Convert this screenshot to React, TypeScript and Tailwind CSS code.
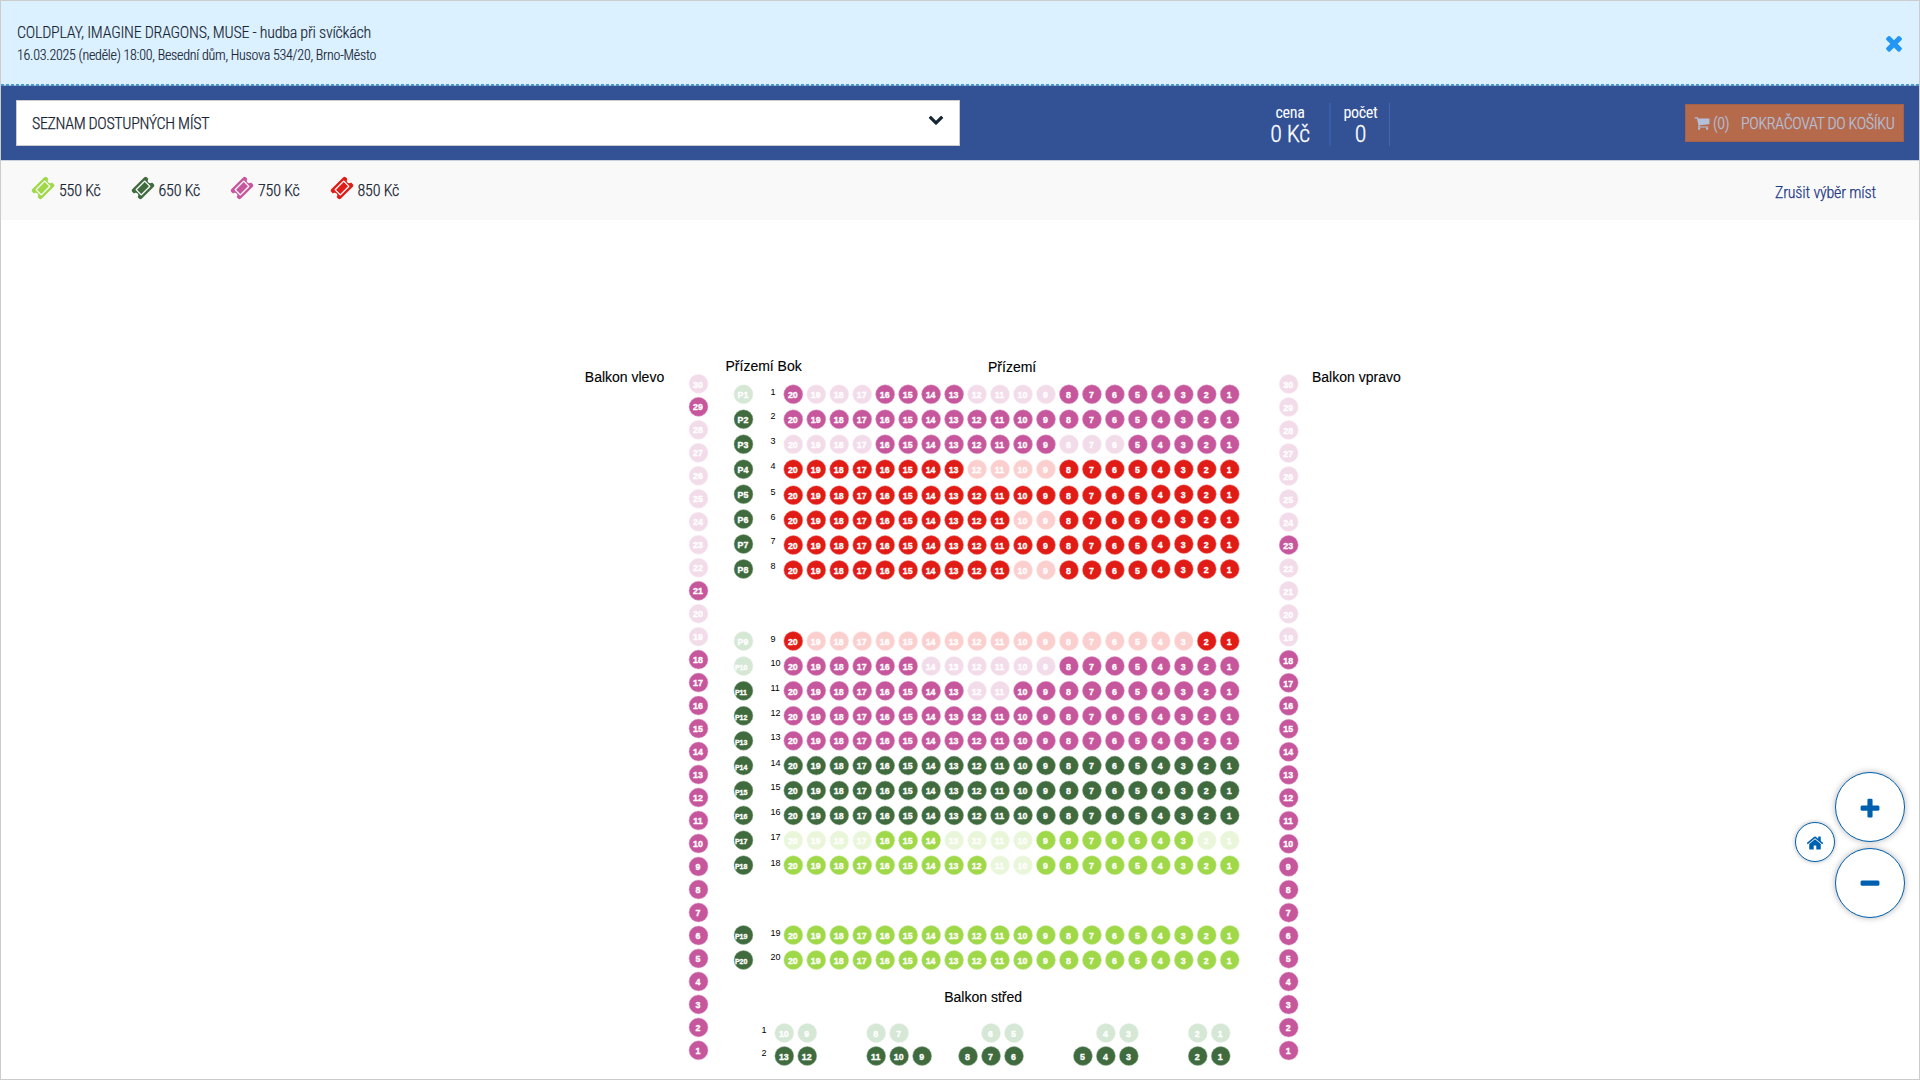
type Tone = "purple" | "red" | "green" | "lime";

const ICONS = {
  ticket:
    "M1024 452l316 316-572 572-316-316zm-211 979l618-618q19-19 19-45t-19-45l-362-362q-18-18-45-18t-45 18l-618 618q-19 19-19 45t19 45l362 362q18 18 45 18t45-18zm889-637l-907 908q-37 37-90.500 37t-90.500-37l-126-126q56-56 56-136t-56-136-136-56-136 56l-125-126q-37-37-37-90.500t37-90.500l907-906q37-37 90.500-37t90.500 37l125 125q-56 56-56 136t56 136 136 56 136-56l126 125q37 37 37 90.500t-37 90.500z",
  times:
    "M1490 1322q0 40-28 68l-136 136q-28 28-68 28t-68-28l-294-294-294 294q-28 28-68 28t-68-28l-136-136q-28-28-28-68t28-68l294-294-294-294q-28-28-28-68t28-68l136-136q28-28 68-28t68 28l294 294 294-294q28-28 68-28t68 28l136 136q28 28 28 68t-28 68l-294 294 294 294q28 28 28 68z",
  plus: "M1600 736v192q0 40-28 68t-68 28h-416v416q0 40-28 68t-68 28h-192q-40 0-68-28t-28-68v-416h-416q-40 0-68-28t-28-68v-192q0-40 28-68t68-28h416v-416q0-40 28-68t68-28h192q40 0 68 28t28 68v416h416q40 0 68 28t28 68z",
  minus:
    "M1600 736v192q0 40-28 68t-68 28h-1216q-40 0-68-28t-28-68v-192q0-40 28-68t68-28h1216q40 0 68 28t28 68z",
  home: "M1472 992v480q0 26-19 45t-45 19h-384v-384h-256v384h-384q-26 0-45-19t-19-45v-480q0-1 .5-3t.5-3l575-474 575 474q1 2 1 6zm223-69l-62 74q-8 9-21 11h-3q-13 0-21-7l-692-577-692 577q-12 8-24 7-13-2-21-11l-62-74q-8-10-7-23.500t11-21.500l719-599q32-26 76-26t76 26l244 204v-195q0-14 9-23t23-9h192q14 0 23 9t9 23v408l219 182q10 8 11 21.500t-7 23.500z",
  cart: "M704 1536q0 52-38 90t-90 38-90-38-38-90 38-90 90-38 90 38 38 90zm896 0q0 52-38 90t-90 38-90-38-38-90 38-90 90-38 90 38 38 90zm128-1088v512q0 24-16.500 42.500t-40.500 21.500l-1044 122q13 60 13 70 0 16-24 64h920q26 0 45 19t19 45-19 45-45 19h-1024q-26 0-45-19t-19-45q0-11 8-31.500t16-36 21.500-40 15.500-29.500l-177-823h-204q-26 0-45-19t-19-45 19-45 45-19h256q16 0 28.500 6.500t19.500 15.500 13 24.500 8 26 5.500 29.500 4.500 26h1201q26 0 45 19t19 45z",
  chevron:
    "M1683 808l-742 741q-19 19-45 19t-45-19l-742-741q-19-19-19-45.500t19-45.500l166-165q19-19 45-19t45 19l531 531 531-531q19-19 45-19t45 19l166 165q19 19 19 45.500t-19 45.500z",
};

function Icon({ name, className }: { name: keyof typeof ICONS; className: string }) {
  return (
    <svg viewBox="0 0 1792 1792" className={`shrink-0 fill-current ${className}`} aria-hidden="true">
      <path d={ICONS[name]} />
    </svg>
  );
}

const FREE: Record<Tone, string> = {
  purple: "fill-[#c7579d] stroke-[#dda0c8]",
  red: "fill-[#e11b15] stroke-[#ee8a86]",
  green: "fill-[#3f6b3e] stroke-[#9bb59b]",
  lime: "fill-[#9fd848] stroke-[#c8e99a]",
};
const TAKEN: Record<Tone, string> = {
  purple: "fill-[#f3dcea] stroke-[#f8ebf3]",
  red: "fill-[#fccfcf] stroke-[#fde4e4]",
  green: "fill-[#d5e7d5] stroke-[#e6f1e6]",
  lime: "fill-[#eaf6da] stroke-[#f3faea]",
};

const PITCH = 22.97;
const FIRST_X = 793.3;

interface SeatProps {
  x: number;
  y: number;
  label: string;
  tone: Tone;
  taken?: boolean;
}

function Seat({ x, y, label, tone, taken }: SeatProps) {
  const long = label.length > 2;
  return (
    <g>
      <circle cx={x} cy={y} r={9.5} strokeWidth={0.5} className={taken ? TAKEN[tone] : FREE[tone]} />
      <text
        x={long ? x - 8.6 : x - 0.5}
        y={long ? y + 4 : y + 3.7}
        textAnchor={long ? "start" : "middle"}
        strokeWidth={0.35}
        className={
          long
            ? "fill-white stroke-white text-[7px] font-bold"
            : "fill-white stroke-white text-[8.8px] font-bold"
        }
      >
        {label}
      </text>
    </g>
  );
}

interface Row {
  n: number;
  y: number;
  base: number;
  tone: Tone;
  taken: number[];
}

const ROWS: Row[] = [
  { n: 1, y: 394.3, base: 394.5, tone: "purple", taken: [19, 18, 17, 12, 11, 10, 9] },
  { n: 2, y: 419.3, base: 419.4, tone: "purple", taken: [] },
  { n: 3, y: 444.3, base: 444.4, tone: "purple", taken: [20, 19, 18, 17, 8, 7, 6] },
  { n: 4, y: 469.2, base: 469.3, tone: "red", taken: [12, 11, 10, 9] },
  { n: 5, y: 495.2, base: 495.3, tone: "red", taken: [] },
  { n: 6, y: 520.1, base: 520, tone: "red", taken: [10, 9] },
  { n: 7, y: 545, base: 544.2, tone: "red", taken: [] },
  { n: 8, y: 570, base: 569.2, tone: "red", taken: [10, 9] },
  { n: 9, y: 641, base: 641.6, tone: "red", taken: [19, 18, 17, 16, 15, 14, 13, 12, 11, 10, 9, 8, 7, 6, 5, 4, 3] },
  { n: 10, y: 666, base: 665.7, tone: "purple", taken: [14, 13, 12, 11, 10, 9] },
  { n: 11, y: 690.8, base: 690.7, tone: "purple", taken: [12, 11] },
  { n: 12, y: 715.8, base: 715.6, tone: "purple", taken: [] },
  { n: 13, y: 740.7, base: 740.4, tone: "purple", taken: [] },
  { n: 14, y: 765.6, base: 765.6, tone: "green", taken: [] },
  { n: 15, y: 790.5, base: 790.4, tone: "green", taken: [] },
  { n: 16, y: 815.4, base: 815.2, tone: "green", taken: [] },
  { n: 17, y: 840.3, base: 840.3, tone: "lime", taken: [20, 19, 18, 17, 13, 12, 11, 10, 2, 1] },
  { n: 18, y: 865.2, base: 865.6, tone: "lime", taken: [11, 10] },
  { n: 19, y: 935, base: 935.6, tone: "lime", taken: [] },
  { n: 20, y: 960, base: 959.6, tone: "lime", taken: [] },
];

const SIDE_TAKEN = [1, 9, 10];

// Rows 5 to 8 step up by one unit for the four seats nearest the aisle.
const stepUp = (row: number, seat: number) => (row >= 5 && row <= 8 && seat <= 4 ? 1 : 0);

const LEFT_FREE = [29, 21];
const RIGHT_FREE = [23];

const CENTRE_1: [number, number][] = [[10, 0], [9, 1], [8, 4], [7, 5], [6, 9], [5, 10], [4, 14], [3, 15], [2, 18], [1, 19]];
const CENTRE_2: [number, number][] = [
  [13, 0], [12, 1], [11, 4], [10, 5], [9, 6], [8, 8], [7, 9], [6, 10], [5, 13], [4, 14], [3, 15], [2, 18], [1, 19],
];

const TITLES: [string, number, number][] = [
  ["Balkon vlevo", 584.8, 382.3],
  ["Přízemí Bok", 725.5, 370.6],
  ["Přízemí", 988, 371.6],
  ["Balkon vpravo", 1312, 382.3],
  ["Balkon střed", 944.2, 1001.6],
];

const numbers = (count: number) => Array.from({ length: count }, (_, i) => count - i);

function SeatMap() {
  return (
    <svg
      viewBox="1 220 1918 859"
      className="h-[859px] w-[1918px] shrink-0 font-['Liberation_Sans',Arial,sans-serif]"
    >
      {TITLES.map(([text, x, y]) => (
        <text key={text} x={x} y={y} strokeWidth={0.12} className="fill-black stroke-black text-[14px]">
          {text}
        </text>
      ))}

      {numbers(30).map((n) => (
        <g key={n}>
          <Seat x={698.5} y={383.8 + (30 - n) * 22.985} label={String(n)} tone="purple" taken={n > 18 && !LEFT_FREE.includes(n)} />
          <Seat x={1288.7} y={384 + (30 - n) * 22.985} label={String(n)} tone="purple" taken={n > 18 && !RIGHT_FREE.includes(n)} />
        </g>
      ))}

      {ROWS.map((row) => (
        <g key={row.n}>
          <Seat
            x={743.5}
            y={row.y - stepUp(row.n, 1)}
            label={`P${row.n}`}
            tone="green"
            taken={SIDE_TAKEN.includes(row.n)}
          />
          <text x={770.5} y={row.base} className="fill-black text-[9px]">
            {row.n}
          </text>
          {numbers(20).map((n) => (
            <Seat
              key={n}
              x={FIRST_X + (20 - n) * PITCH}
              y={row.y - stepUp(row.n, n)}
              label={String(n)}
              tone={row.tone}
              taken={row.taken.includes(n)}
            />
          ))}
        </g>
      ))}

      <text x={761.5} y={1033.2} className="fill-black text-[9px]">1</text>
      <text x={761.5} y={1056.4} className="fill-black text-[9px]">2</text>
      {CENTRE_1.map(([n, slot]) => (
        <Seat key={n} x={784.3 + slot * PITCH} y={1033} label={String(n)} tone="green" taken />
      ))}
      {CENTRE_2.map(([n, slot]) => (
        <Seat key={n} x={784.3 + slot * PITCH} y={1056} label={String(n)} tone="green" />
      ))}
    </svg>
  );
}

const PRICES = [
  { label: "550 Kč", color: "text-[#9fd848]" },
  { label: "650 Kč", color: "text-[#3f6b3e]" },
  { label: "750 Kč", color: "text-[#c7579d]" },
  { label: "850 Kč", color: "text-[#e11b15]" },
];

function Header() {
  return (
    <>
      <header className="flex h-[84px] items-center justify-between border-b border-dashed border-[#4a97cc] bg-[#dbf1ff] pr-[13px] pl-4">
        <div className="flex flex-col pt-0.5 font-light [-webkit-text-stroke:0.15px]">
          <h1 className="text-[16px] leading-6 tracking-[-0.25px]">
            COLDPLAY, IMAGINE DRAGONS, MUSE - hudba při svíčkách
          </h1>
          <p className="text-[14px] leading-[21px] tracking-[-0.25px]">
            16.03.2025 (neděle) 18:00, Besední dům, Husova 534/20, Brno-Město
          </p>
        </div>
        <button aria-label="Zavřít" className="text-[#2196f3]">
          <Icon name="times" className="size-6" />
        </button>
      </header>
      <div className="border-t border-dashed border-[#4a97cc] bg-[#a3b5cf]" />
    </>
  );
}

function Toolbar() {
  return (
    <div className="flex h-[74px] items-start bg-[#325295] px-[15px] text-[16px] tracking-[-0.34px]">
      <button className="mt-[14px] flex h-[46px] w-[944px] items-center justify-between border border-[#ccc] bg-white px-[15px] font-light [-webkit-text-stroke:0.25px]">
        <span className="pt-0.5">SEZNAM DOSTUPNÝCH MÍST</span>
        <Icon name="chevron" className="mb-2 size-4" />
      </button>
      <div className="mt-[17px] ml-[291px] flex h-[43px] text-center text-white">
        <div className="flex w-20 flex-col border-r-2 border-[#3b5ca8]">
          <span className="leading-5">cena</span>
          <span className="text-2xl leading-[22px] font-light [-webkit-text-stroke:0.3px]">0 Kč</span>
        </div>
        <div className="flex w-[59px] flex-col border-r border-[#4467b3] pl-px">
          <span className="leading-5">počet</span>
          <span className="text-2xl leading-[22px] font-light [-webkit-text-stroke:0.3px]">0</span>
        </div>
      </div>
      <button className="mt-[18px] ml-auto flex h-[38px] w-[219px] items-center border border-[#a5624a] bg-[#b56b4b] pl-2 font-light text-[#b3c0dc] [-webkit-text-stroke:0.25px]">
        <Icon name="cart" className="size-4" />
        <span className="ml-[3px] w-[28px] pt-px text-left">(0)</span>
        <span className="pt-px whitespace-nowrap">POKRAČOVAT DO KOŠÍKU</span>
      </button>
    </div>
  );
}

function Legend() {
  return (
    <div className="flex h-[60px] items-start justify-between border-t border-[#ccd1de] bg-[#f9f9f9] pr-[43px] pl-[30px] text-[16px] font-light tracking-[-0.2px] [-webkit-text-stroke:0.25px]">
      <ul className="flex pt-[15px]">
        {PRICES.map((price) => (
          <li key={price.label} className="flex w-[99.5px] items-start gap-1">
            <Icon name="ticket" className={`size-6 ${price.color}`} />
            <span className="pt-[3px] leading-6">{price.label}</span>
          </li>
        ))}
      </ul>
      <a className="pt-[20px] leading-6 tracking-[-0.18px] text-[#1f3a86]">Zrušit výběr míst</a>
    </div>
  );
}

function ZoomControls() {
  return (
    <div className="absolute top-[771px] right-[14px] flex items-center text-[#0060b0]">
      <button
        aria-label="Celý plán"
        className="mb-[7px] flex size-10 items-center justify-center rounded-full border border-[#0060b0] bg-white shadow-[0_0_4px_rgba(0,0,0,0.3)]"
      >
        <Icon name="home" className="mt-0.5 size-[18px]" />
      </button>
      <div className="flex flex-col gap-[6px]">
        <button
          aria-label="Přiblížit"
          className="flex size-[70px] items-center justify-center rounded-full border border-[#0060b0] bg-white shadow-[0_0_6px_rgba(0,0,0,0.3)]"
        >
          <Icon name="plus" className="mt-[3px] size-6" />
        </button>
        <button
          aria-label="Oddálit"
          className="flex size-[70px] items-center justify-center rounded-full border border-[#0060b0] bg-white shadow-[0_0_6px_rgba(0,0,0,0.3)]"
        >
          <Icon name="minus" className="mt-px size-6" />
        </button>
      </div>
    </div>
  );
}

export default function App() {
  return (
    <div className="relative flex h-[1080px] w-[1920px] flex-col overflow-hidden border border-[#ccc] bg-white font-['Roboto_Condensed',Roboto,sans-serif] text-[#172433]">
      <Header />
      <Toolbar />
      <Legend />
      <SeatMap />
      <ZoomControls />
    </div>
  );
}
